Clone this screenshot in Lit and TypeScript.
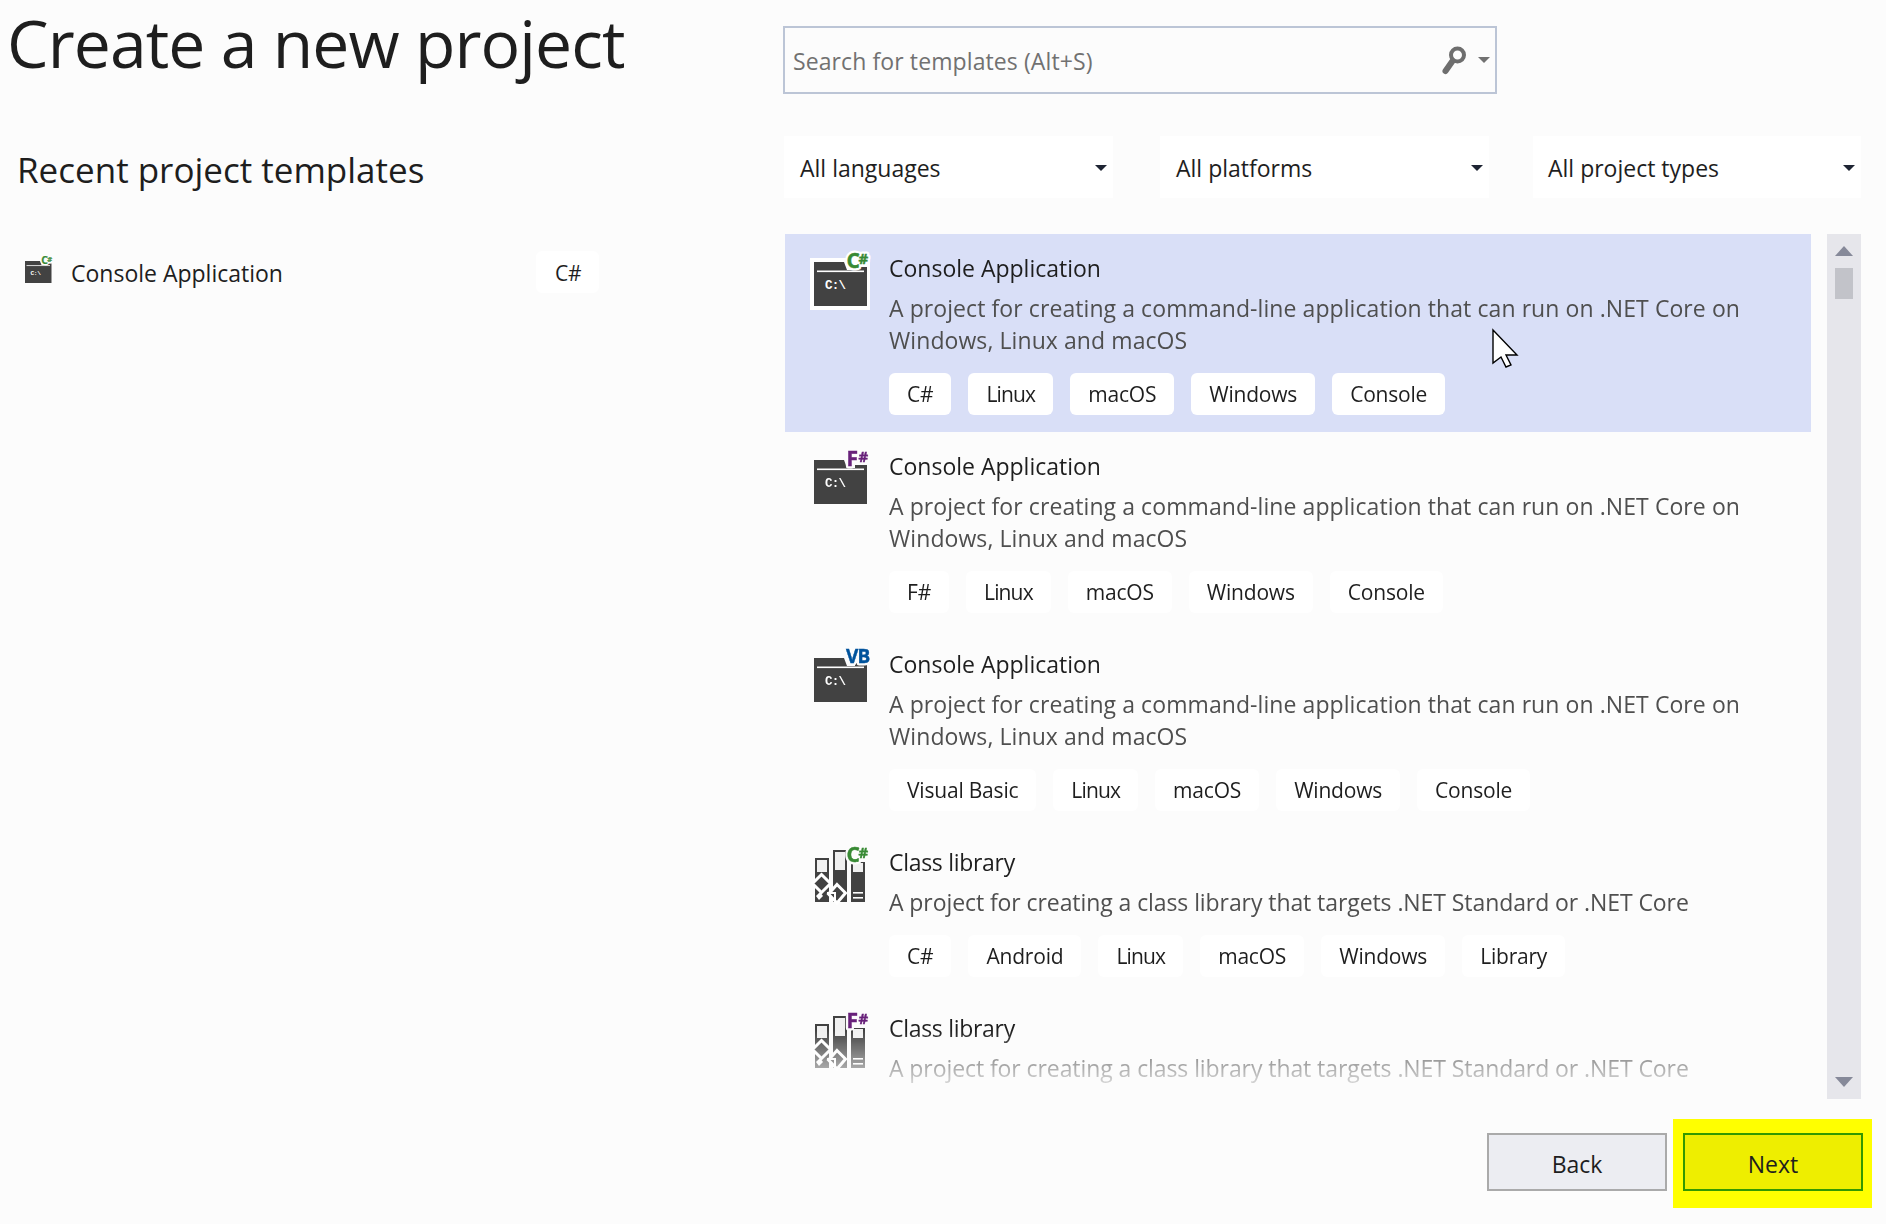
import { LitElement, html, css, svg } from "lit";
import { customElement } from "lit/decorators.js";

type Lang = "C#" | "F#" | "VB";
const LANG_COLOR: Record<Lang, string> = { "C#": "#388a34", "F#": "#68217a", VB: "#00539c" };

function badge(lang: Lang, halo: string) {
  const c = LANG_COLOR[lang];
  const base = "font-family:'Open Sans',sans-serif;font-weight:700;";
  const under = `${base}stroke:${halo};stroke-width:5px;stroke-linejoin:round;`;
  const over = `${base}stroke:${c};stroke-width:0.4px;`;
  if (lang === "VB") {
    return svg`
      <text x="36" y="15" fill=${halo} font-size="19" style=${under + "letter-spacing:-0.8px"}>VB</text>
      <text x="36" y="15" fill=${c} font-size="19" style=${over + "letter-spacing:-0.8px"}>VB</text>`;
  }
  const parts = (s: string) => svg`
    <text x="36.5" y="16" fill=${s === under ? halo : c} font-size="21" style=${s}>${lang[0]}</text>
    <text x="48.5" y="12" fill=${s === under ? halo : c} font-size="15" style=${s}>#</text>`;
  return svg`${parts(under)}${parts(over)}`;
}

function consoleIcon(lang: Lang, halo: string, cls = "icon") {
  return html`<svg class=${cls} viewBox="0 0 62 58" width="62" height="58">
    <rect x="0" y="6" width="60" height="52" fill=${halo}></rect>
    <path d="M4 10H34L37 18H45V15H57V54H4Z" fill="#424242"></path>
    <rect x="7" y="18.5" width="47" height="1.6" fill="#fff"></rect>
    <text x="15" y="37" fill="#fff" font-size="12.5" font-weight="700" style="font-family:'Liberation Mono',monospace;letter-spacing:-0.8px">C:\\</text>
    ${badge(lang, halo)}
  </svg>`;
}

function libraryIcon(lang: Lang, halo: string) {
  return html`<svg class="icon" viewBox="0 0 62 58" width="62" height="58">
    <rect x="5" y="12" width="14" height="44" fill="#424242"></rect>
    <rect x="7" y="14" width="10" height="12" fill="#f0f0f0"></rect>
    <rect x="23" y="4" width="14" height="52" fill="#424242"></rect>
    <rect x="25" y="6" width="10" height="18" fill="#f0f0f0"></rect>
    <rect x="41" y="16" width="14" height="40" fill="#424242"></rect>
    <rect x="43" y="17" width="10" height="9" fill="#f0f0f0"></rect>
    <rect x="43" y="46" width="10" height="1.6" fill="#fff"></rect>
    <rect x="43" y="51" width="10" height="1.6" fill="#fff"></rect>
    <path d="M11.5 28.5L20.5 37.5L11.5 46.5L2.5 37.5Z" fill="#424242" stroke="#fff" stroke-width="3"></path>
    <path d="M27 38.5L35.5 47L27 57L18.5 48Z" fill="#424242" stroke="#fff" stroke-width="3"></path>
    <path d="M17 47H25V54H20" fill="none" stroke="#fff" stroke-width="2"></path>
    <path d="M6 50L10 46L13 50L9 54Z" fill="#fff"></path>
    ${badge(lang, halo)}
  </svg>`;
}

interface Template {
  kind: "console" | "library";
  lang: Lang;
  title: string;
  lines: string[];
  tags: string[];
  selected?: boolean;
}

const CONSOLE_LINES = [
  "A project for creating a command-line application that can run on .NET Core on",
  "Windows, Linux and macOS",
];
const LIB_LINES = ["A project for creating a class library that targets .NET Standard or .NET Core"];

const TEMPLATES: Template[] = [
  { kind: "console", lang: "C#", title: "Console Application", lines: CONSOLE_LINES, tags: ["C#", "Linux", "macOS", "Windows", "Console"], selected: true },
  { kind: "console", lang: "F#", title: "Console Application", lines: CONSOLE_LINES, tags: ["F#", "Linux", "macOS", "Windows", "Console"] },
  { kind: "console", lang: "VB", title: "Console Application", lines: CONSOLE_LINES, tags: ["Visual Basic", "Linux", "macOS", "Windows", "Console"] },
  { kind: "library", lang: "C#", title: "Class library", lines: LIB_LINES, tags: ["C#", "Android", "Linux", "macOS", "Windows", "Library"] },
  { kind: "library", lang: "F#", title: "Class library", lines: LIB_LINES, tags: [] },
];

@customElement("app-root")
export class AppRoot extends LitElement {
  static styles = css`
    :host {
      display: block;
      position: relative;
      width: 1886px;
      height: 1224px;
      overflow: hidden;
      background: #fcfcfc;
      color: #1e1e1e;
      font-family: "Open Sans", "Noto Sans", sans-serif;
      font-size: 23px;
    }
    .page { display: flex; height: 100%; }
    .left { width: 783px; flex: none; }
    h1 {
      margin: 0 0 0 7px;
      height: 90px;
      font-size: 66px;
      line-height: 85px;
      font-weight: 400;
      letter-spacing: -0.9px;
      white-space: nowrap;
    }
    h2 {
      margin: 57px 0 0 17px;
      font-size: 35px;
      line-height: 46px;
      font-weight: 400;
      white-space: nowrap;
    }
    .recent {
      display: flex;
      align-items: center;
      margin-top: 58px;
      height: 42px;
      padding-left: 23px;
    }
    .recent .tag { padding: 2px 18px 0 19px; height: 40px; line-height: 40px; }
    .mini { width: 31px; height: 29px; flex: none; margin-top: -3px; overflow: visible; }
    .recent-name { margin-left: 17px; width: 465px; padding-top: 2px; white-space: nowrap; }
    .right { flex: 1; padding: 26px 14px 0 0; box-sizing: border-box; min-width: 0; }
    .search {
      box-sizing: border-box;
      width: 714px;
      height: 68px;
      border: 2px solid #bcc5d6;
      display: flex;
      align-items: center;
      padding: 0 4px 0 8px;
      color: #717171;
    }
    .search-text { flex: 1; white-space: nowrap; padding-top: 2px; letter-spacing: 0.1px; }
    .search svg { flex: none; display: block; }
    .filters {
      display: grid;
      grid-template-columns: 376px 373px 328px;
      margin: 42px 0 0 1px;
    }
    .filter {
      background: #fff;
      width: 329px;
      height: 62px;
      box-sizing: border-box;
      display: flex;
      align-items: center;
      justify-content: space-between;
      padding: 2px 6px 0 16px;
    }
    .filter:last-child { width: 328px; padding-left: 15px; }
    .arrow-d {
      width: 0;
      height: 0;
      border-left: 6px solid transparent;
      border-right: 6px solid transparent;
      border-top: 6px solid #1e2433;
    }
    .body { display: flex; margin: 36px 0 0 2px; height: 865px; gap: 16px; }
    .list {
      width: 1026px;
      flex: none;
      overflow: hidden;
      -webkit-mask-image: linear-gradient(#000 796px, transparent 865px);
      mask-image: linear-gradient(#000 796px, transparent 865px);
    }
    .row { display: flex; padding: 18px 0 17px; }
    .row.selected { background: #d9dff7; }
    .icon-col { width: 104px; flex: none; padding-left: 25px; box-sizing: border-box; }
    .icon { display: block; overflow: visible; }
    .title { line-height: 32px; white-space: nowrap; }
    .library .title { letter-spacing: -0.3px; }
    .desc { margin-top: 8px; line-height: 32px; color: #4f4f4f; white-space: nowrap; letter-spacing: 0.08px; }
    .library .desc { letter-spacing: -0.08px; }
    .tags { display: flex; gap: 17px; margin-top: 17px; }
    .tag {
      height: 42px;
      line-height: 42px;
      padding: 0 18px;
      background: #fff;
      border-radius: 6px;
      white-space: nowrap;
      font-size: 21px;
      letter-spacing: -0.2px;
    }
    .tag.tight { letter-spacing: -0.85px; }
    .scrollbar {
      width: 34px;
      flex: none;
      background: #e6e6eb;
      display: flex;
      flex-direction: column;
      align-items: center;
      padding: 12px 0;
      box-sizing: border-box;
    }
    .up, .down {
      width: 0;
      height: 0;
      border-left: 9px solid transparent;
      border-right: 9px solid transparent;
    }
    .up { border-bottom: 10px solid #868999; }
    .down { border-top: 10px solid #868999; margin-top: auto; }
    .thumb { width: 18px; height: 31px; background: #c2c3c9; margin-top: 12px; }
    .actions { display: flex; justify-content: flex-end; align-items: flex-start; margin-top: 20px; }
    .btn {
      box-sizing: border-box;
      width: 180px;
      height: 58px;
      padding-top: 4px;
      display: flex;
      align-items: center;
      justify-content: center;
      border: 2px solid #aaa;
      background: #ecedf2;
    }
    .back { margin: 14px 6px 0 0; }
    .highlight { background: #ffff00; padding: 14px 9px 17px 10px; }
    .next { background: #eeee00; border-color: #339900; }
    .cursor { position: absolute; left: 1491px; top: 328px; }
  `;

  private row(t: Template) {
    return html`<div class="row ${t.kind} ${t.selected ? "selected" : ""}">
      <div class="icon-col">
        ${t.kind === "console"
          ? consoleIcon(t.lang, t.selected ? "#fff" : "#fcfcfc")
          : libraryIcon(t.lang, "#fcfcfc")}
      </div>
      <div class="text">
        <div class="title">${t.title}</div>
        <div class="desc">${t.lines.map((l, i) => html`${i ? html`<br />` : ""}${l}`)}</div>
        ${t.tags.length
          ? html`<div class="tags">${t.tags.map(
              (x) => html`<span class="tag ${x === "Linux" ? "tight" : ""}">${x}</span>`
            )}</div>`
          : ""}
      </div>
    </div>`;
  }

  render() {
    return html`
      <div class="page">
        <section class="left">
          <h1>Create a new project</h1>
          <h2>Recent project templates</h2>
          <div class="recent">
            ${consoleIcon("C#", "#fcfcfc", "mini")}
            <span class="recent-name">Console Application</span>
            <span class="tag">C#</span>
          </div>
        </section>
        <section class="right">
          <div class="search">
            <span class="search-text">Search for templates (Alt+S)</span>
            <svg width="54" height="30" viewBox="0 0 54 30">
              <circle cx="20.5" cy="10" r="6.5" fill="none" stroke="#6e6e6e" stroke-width="4"></circle>
              <path d="M15.5 16L8.5 26" stroke="#6e6e6e" stroke-width="6" stroke-linecap="round"></path>
              <path d="M41 12H53L47 18Z" fill="#717171"></path>
            </svg>
          </div>
          <div class="filters">
            ${["All languages", "All platforms", "All project types"].map(
              (f) => html`<div class="filter"><span>${f}</span><span class="arrow-d"></span></div>`
            )}
          </div>
          <div class="body">
            <div class="list">${TEMPLATES.map((t) => this.row(t))}</div>
            <div class="scrollbar">
              <div class="up"></div>
              <div class="thumb"></div>
              <div class="down"></div>
            </div>
          </div>
          <div class="actions">
            <div class="btn back">Back</div>
            <div class="highlight"><div class="btn next">Next</div></div>
          </div>
        </section>
      </div>
      <svg class="cursor" width="32" height="42" viewBox="0 0 32 42">
        <path d="M2 2V35L10 29L15 39L20 37L15 27H26Z" fill="#fff" stroke="#000" stroke-width="1.4" stroke-linejoin="miter"></path>
      </svg>
    `;
  }
}
